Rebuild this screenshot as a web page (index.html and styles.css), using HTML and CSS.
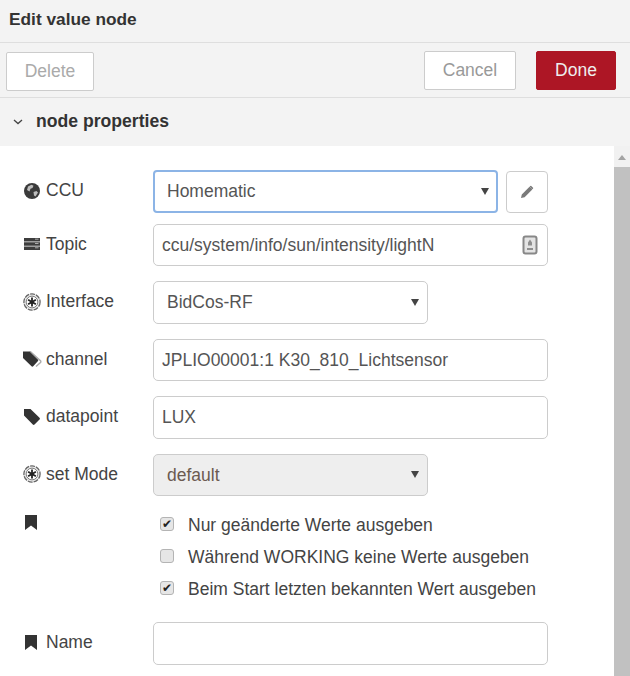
FILE: index.html
```html
<!DOCTYPE html>
<html lang="de">
<head>
<meta charset="utf-8">
<title>Edit value node</title>
<link rel="stylesheet" href="styles.css">
</head>
<body>
<header class="title">Edit value node</header>
<div class="toolbar">
  <button class="btn btn-delete" type="button">Delete</button>
  <div class="spacer"></div>
  <button class="btn btn-cancel" type="button">Cancel</button>
  <button class="btn btn-done" type="button">Done</button>
</div>
<div class="section-head">
  <svg class="chev" width="10" height="6" viewBox="0 0 10 6"><path d="M1 1l4 3.600L9 1" fill="none" stroke="#444" stroke-width="1.300"/></svg>
  <span>node properties</span>
</div>
<div class="body">
  <form class="form">
    <div class="row row-43">
      <label class="lab"><svg class="ico" viewBox="0 0 16 16"><circle cx="8" cy="8" r="8" fill="#3a3a3a"/><path d="M4 3.500l3.500-1.800 2 1-1 2.300-2 .7-1 2.800L3 7zM9.500 9l3-1 1.500 1.500L11.500 13.500l-1.500-1z" fill="#bdbdbd"/></svg>CCU</label>
      <div class="sel sel-focus sel-ccu"><select><option>Homematic</option></select><i class="arrow"></i></div>
      <button class="edit" type="button"><svg width="14" height="14" viewBox="0 0 14 14"><path d="M1 13l.8-3.600L9.500 1.700l2.800 2.800L4.600 12.200zM10.300 1l.7-.3 2.300 2.300-.4.800-.6.500L9.600 1.600z" fill="#7a7a7a"/></svg></button>
    </div>
    <div class="row row-42 gap-11">
      <label class="lab"><svg class="ico" viewBox="0 0 16 16"><path d="M0 2h16v3.400H0zM0 6.300h16v3.400H0zM0 10.600h16V14H0z" fill="#3d3d3d"/><path d="M11 3.200h3.500M11 7.500h3.500M11 11.800h3.500" stroke="#aaa"/></svg>Topic</label>
      <div class="field field-full"><input type="text" value="ccu/system/info/sun/intensity/lightN"><svg class="blank" width="16" height="20" viewBox="0 0 16 20"><rect x="1.500" y="1.500" width="13" height="17" rx="2" fill="#e4e4e4" stroke="#888" stroke-width="2"/><path d="M8 4.500l2 3v3H6v-3zM5 13h6v2H5z" fill="#8f8f8f"/></svg></div>
    </div>
    <div class="row row-43 gap-15">
      <label class="lab"><svg class="ico ico-e" viewBox="0 0 18 18"><circle cx="9" cy="9" r="8.100" fill="#eee" stroke="#666" stroke-width="1.300" stroke-dasharray="5 1"/><circle cx="9" cy="9" r="5.900" fill="#fff" stroke="#777" stroke-width="1"/><path d="M9 4.500v9M5.100 6.750l7.800 4.500M12.900 6.750l-7.800 4.500" stroke="#222" stroke-width="1.800"/></svg>Interface</label>
      <div class="sel sel-short"><select><option>BidCos-RF</option></select><i class="arrow"></i></div>
    </div>
    <div class="row row-42 gap-15">
      <label class="lab"><svg class="ico ico-t" viewBox="0 0 19 16"><path d="M6.500 .8h1l10 9a1.200 1.200 0 0 1 0 1.700L13 15.500" fill="none" stroke="#aaa" stroke-width="1.400"/><path d="M0 .5h6.500l8.300 8a1.200 1.200 0 0 1 0 1.700l-4.600 5a1.200 1.200 0 0 1-1.700 0L0 7z" fill="#333"/></svg>channel</label>
      <div class="field field-full"><input type="text" value="JPLIO00001:1 K30_810_Lichtsensor"></div>
    </div>
    <div class="row row-43 gap-15">
      <label class="lab"><svg class="ico" viewBox="0 0 16 16"><path d="M0 0h6.500l9 8.800a1.200 1.200 0 0 1 0 1.700l-5 5a1.200 1.200 0 0 1-1.700 0L0 6.500z" fill="#333"/></svg>datapoint</label>
      <div class="field field-full"><input type="text" value="LUX"></div>
    </div>
    <div class="row row-42 gap-15">
      <label class="lab"><svg class="ico ico-e" viewBox="0 0 18 18"><circle cx="9" cy="9" r="8.100" fill="#eee" stroke="#666" stroke-width="1.300" stroke-dasharray="5 1"/><circle cx="9" cy="9" r="5.900" fill="#fff" stroke="#777" stroke-width="1"/><path d="M9 4.500v9M5.100 6.750l7.800 4.500M12.900 6.750l-7.800 4.500" stroke="#222" stroke-width="1.800"/></svg>set Mode</label>
      <div class="sel sel-short sel-off"><select disabled><option>default</option></select><i class="arrow"></i></div>
    </div>
    <div class="checks-row">
      <div class="lab lab-top"><svg class="mark" viewBox="0 0 12 15"><path d="M0 0h12v15L6 10.500 0 15z" fill="#333"/></svg></div>
      <div class="checks">
        <label class="check"><input type="checkbox" checked><span>Nur geänderte Werte ausgeben</span></label>
        <label class="check"><input type="checkbox"><span>Während WORKING keine Werte ausgeben</span></label>
        <label class="check"><input type="checkbox" checked><span>Beim Start letzten bekannten Wert ausgeben</span></label>
      </div>
    </div>
    <div class="row row-43 gap-name">
      <label class="lab"><svg class="mark mark-gap" viewBox="0 0 12 15"><path d="M0 0h12v15L6 10.500 0 15z" fill="#333"/></svg>Name</label>
      <div class="field field-full"><input type="text"></div>
    </div>
  </form>
  <div class="scrollbar"><i class="up"></i><div class="thumb"></div></div>
</div>
</body>
</html>
```

FILE: styles.css
```css
* { box-sizing: border-box; }
html, body { margin: 0; height: 100%; overflow: hidden; }
body {
  width: 630px;
  height: 676px;
  background: #f3f3f3;
  font-family: "Liberation Sans", Arial, sans-serif;
  font-size: 17.5px;
  color: #444;
  display: flex;
  flex-direction: column;
}
.title {
  height: 43px;
  flex: none;
  padding: 9px 0 0 9px;
  font-weight: 700;
  font-size: 17.300px;
  line-height: 20px;
  color: #333;
  border-bottom: 1px solid #dedede;
}
.toolbar {
  height: 55px;
  flex: none;
  display: flex;
  align-items: flex-start;
  padding: 8px 14px 0 6px;
  border-bottom: 1px solid #dedede;
}
.spacer { flex: 1; }
.btn {
  height: 39px;
  font: inherit;
  font-size: 17.500px;
  border-radius: 2px;
  padding: 0;
}
.btn-delete {
  width: 88px;
  margin-top: 1px;
  background: #fff;
  color: #aaa;
  border: 1px solid #ccc;
}
.btn-cancel {
  width: 92px;
  background: #fff;
  color: #999;
  border: 1px solid #ccc;
  margin-right: 20px;
}
.btn-done {
  width: 80px;
  background: #ad1625;
  color: #eee;
  border: 1px solid #ad1625;
}
.section-head {
  height: 48px;
  flex: none;
  display: flex;
  align-items: center;
  padding: 0 0 1px 13px;
  font-weight: 700;
  font-size: 17.600px;
  color: #333;
}
.chev { margin-right: 13px; }
.body {
  flex: 1;
  min-height: 0;
  display: flex;
  background: #fff;
}
.form {
  flex: 1;
  min-width: 0;
  padding: 24px 0 0 24px;
}
.row { display: flex; align-items: center; }
.row-43 { height: 43px; }
.row-42 { height: 42px; }
.gap-11 { margin-top: 11px; }
.gap-15 { margin-top: 15px; }
.gap-name { margin-top: 18px; }
.lab {
  width: 129px;
  flex: none;
  display: flex;
  align-items: center;
  position: relative;
  top: -1px;
  color: #444;
  font-size: 17.500px;
  white-space: nowrap;
}
.ico { width: 16px; height: 16px; margin-right: 6px; flex: none; }
.ico-e { width: 18px; height: 18px; margin-left: -1px; margin-right: 5px; }
.ico-t { width: 19px; height: 16px; margin-left: -1px; margin-right: 4px; }
.mark { width: 12px; height: 15px; flex: none; margin-left: 1px; }
.mark-gap { margin-right: 9px; }
select, input[type="text"] {
  font: inherit;
  color: #555;
  width: 100%;
  height: 100%;
  background: transparent;
  border: 1px solid #ccc;
  border-radius: 5px;
  outline: none;
}
input[type="text"] { padding: 0 8px; color: #555; }
select {
  appearance: none;
  padding: 0 13px 2px;
}
.sel, .field { position: relative; height: 100%; }
.sel-ccu { width: 345px; }
.sel-short { width: 275px; }
.field-full { width: 395px; }
.sel-focus select {
  border: 2px solid #8cb4e6;
  border-radius: 4px;
  padding: 0 12px 2px;
}
.sel-off select { background: #eee; color: #6b5a50; opacity: 1; padding-bottom: 0; }
.arrow {
  position: absolute;
  right: 9px;
  top: 50%;
  margin-top: -4px;
  border-left: 4px solid transparent;
  border-right: 4px solid transparent;
  border-top: 7px solid #444;
}
.blank { position: absolute; right: 10px; top: 11px; }
.edit {
  width: 42px;
  height: 42px;
  margin: 1px 0 0 8px;
  background: #fff;
  border: 1px solid #ccc;
  border-radius: 4px;
  padding: 0;
  display: flex;
  align-items: center;
  justify-content: center;
}
.checks-row { display: flex; margin-top: 15px; }
.lab-top { height: 27px; top: -2px; }
.checks { display: flex; flex-direction: column; padding-left: 7px; margin-top: -3px; }
.check { display: flex; align-items: center; height: 32px; white-space: nowrap; color: #444; font-size: 17.500px; }
.check span { margin-left: 14px; position: relative; top: 1px; }
.check input {
  appearance: none;
  margin: 0;
  width: 14px;
  height: 14px;
  border: 1px solid #b4b4b4;
  border-radius: 3px;
  background: #e6e6e6;
  display: flex;
  align-items: center;
  justify-content: center;
}
.check input:checked::after {
  content: "✔";
  font-family: "DejaVu Sans", sans-serif;
  font-size: 12px;
  line-height: 12px;
  color: #222;
}
.scrollbar {
  width: 16px;
  flex: none;
  background: #f1f1f1;
  display: flex;
  flex-direction: column;
  align-items: center;
}
.up {
  margin-top: 9px;
  flex: none;
  border-left: 4px solid transparent;
  border-right: 4px solid transparent;
  border-bottom: 5px solid #a3a3a3;
}
.thumb {
  width: 16px;
  flex: 1;
  margin-top: 7px;
  background: #c1c1c1;
}
```
